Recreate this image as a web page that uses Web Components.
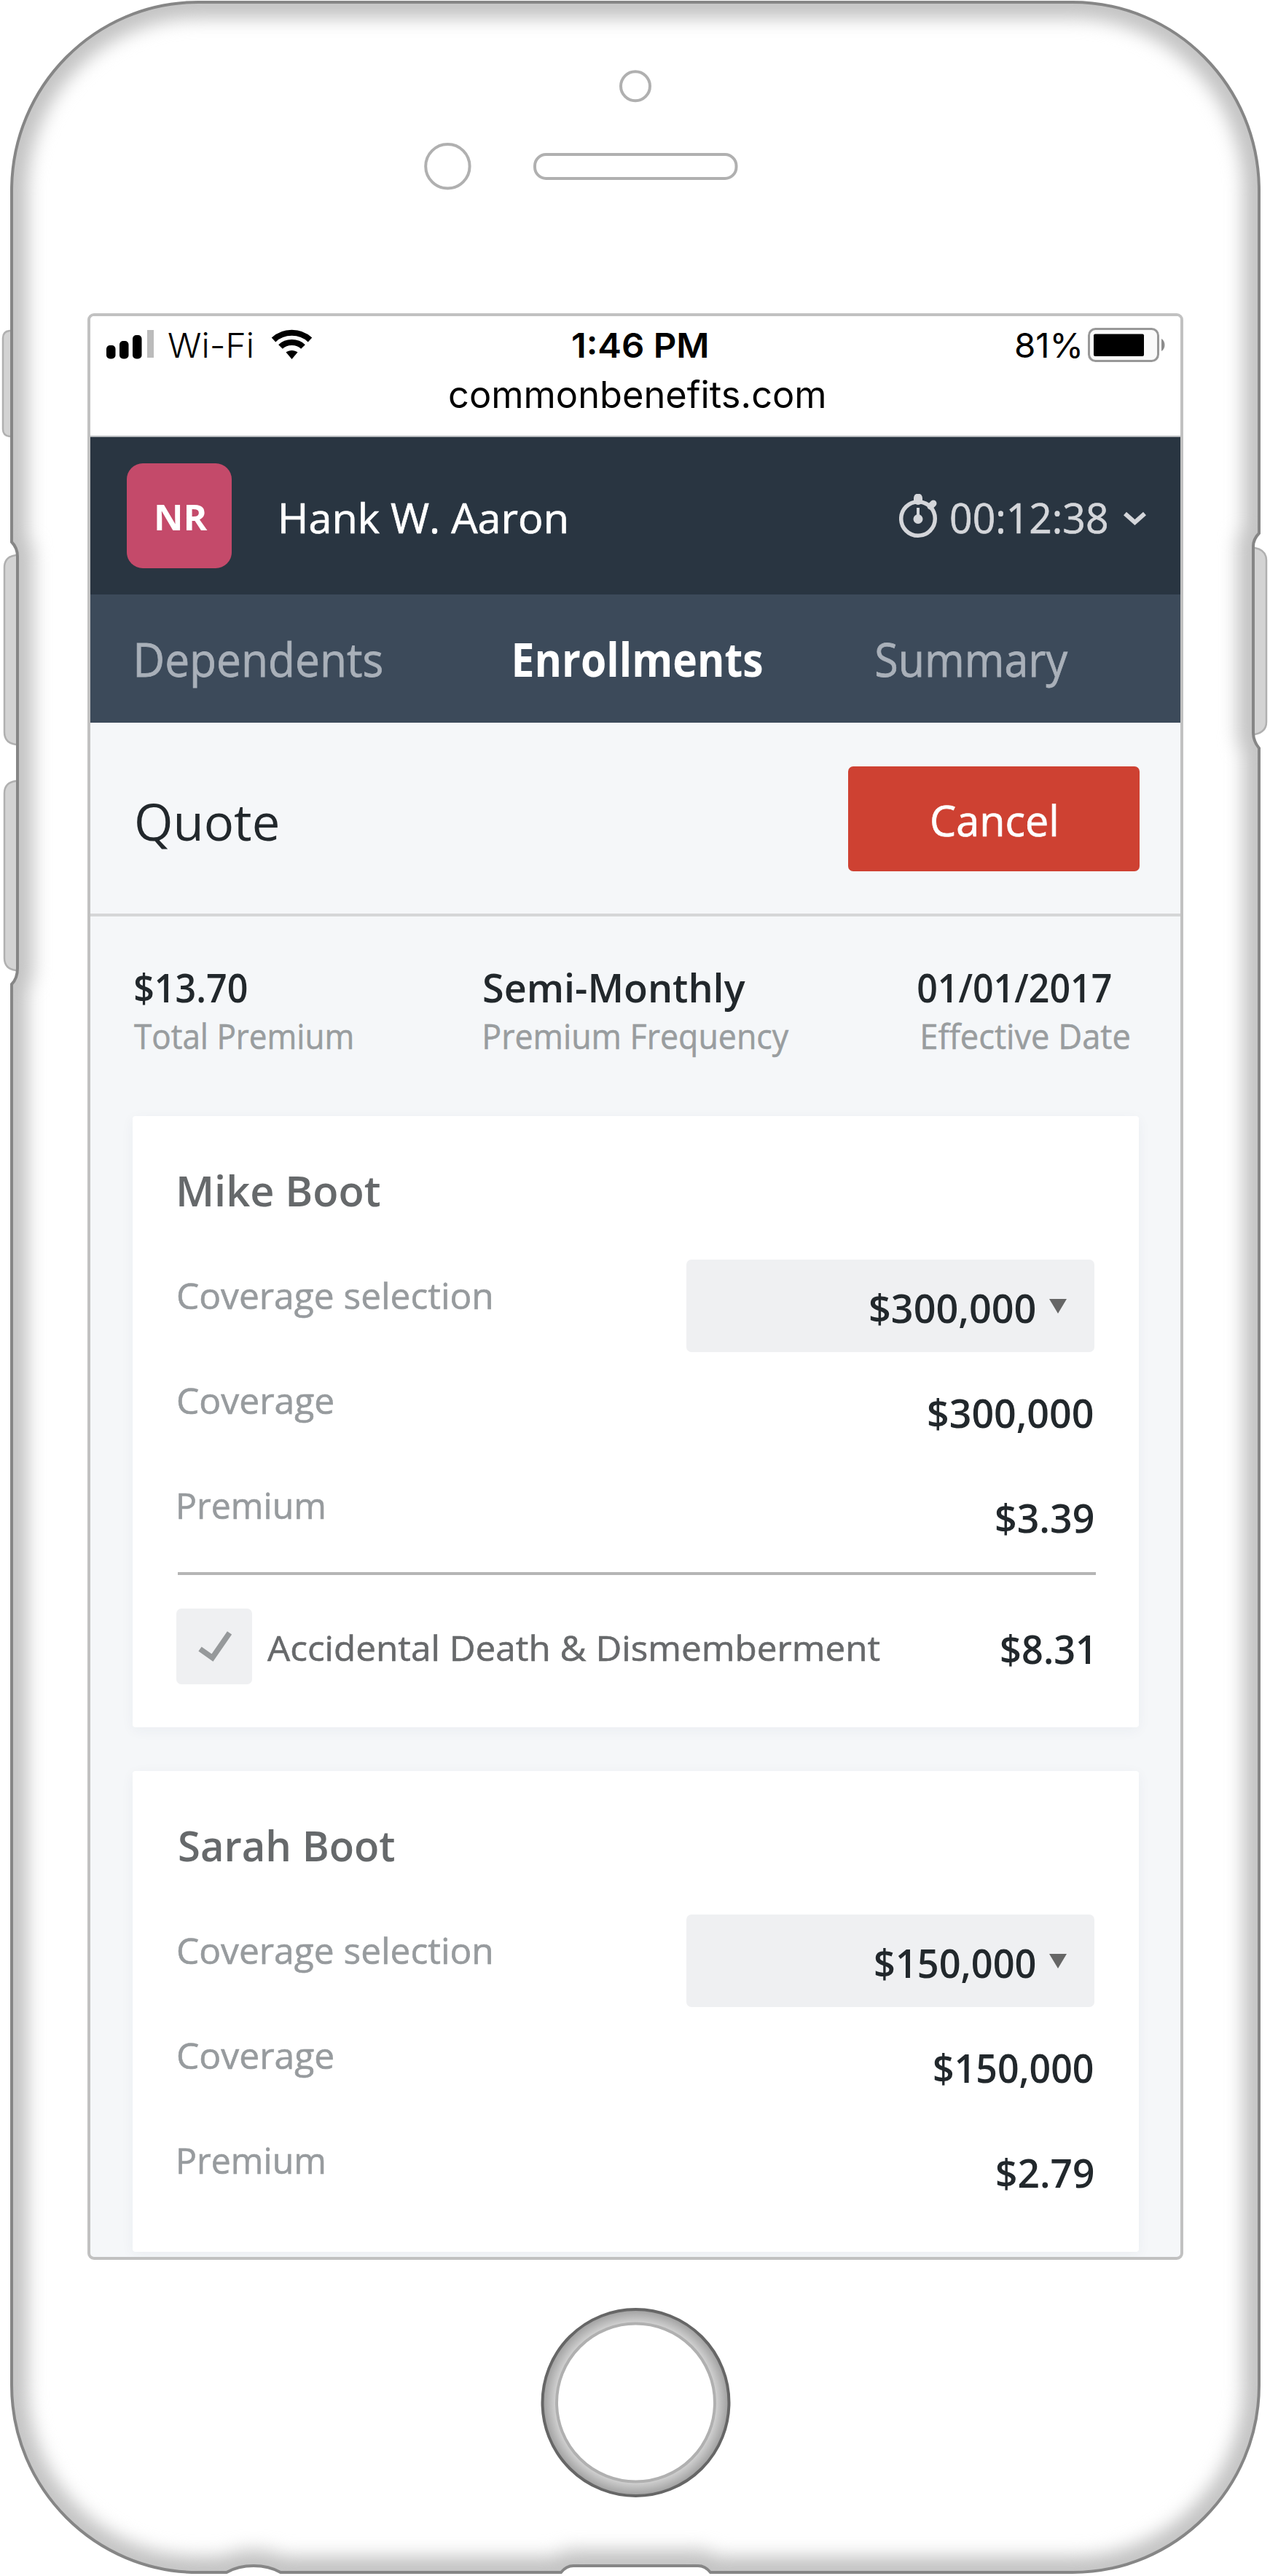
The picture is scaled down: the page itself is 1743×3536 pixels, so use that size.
<!DOCTYPE html>
<html lang="en">
<head>
<meta charset="utf-8">
<title>Quote</title>
<style>
html,body{margin:0;background:#fff}
body{width:1743px;height:3536px;overflow:hidden;font-family:"Open Sans","Noto Sans",sans-serif;font-weight:450}
</style>
</head>
<body>
<phone-frame>
  <status-bar></status-bar>
  <app-header></app-header>
  <tab-bar></tab-bar>
  <quote-bar></quote-bar>
  <quote-stats></quote-stats>
  <coverage-card>
    <fit-text slot="name" w="275">Mike Boot</fit-text>
    <fit-text slot="select" w="227">$300,000</fit-text>
    <fit-text slot="coverage" w="226">$300,000</fit-text>
    <fit-text slot="premium" w="133">$3.39</fit-text>
    <rider-row slot="rider"></rider-row>
  </coverage-card>
  <coverage-card>
    <fit-text slot="name" w="295">Sarah Boot</fit-text>
    <fit-text slot="select" w="220">$150,000</fit-text>
    <fit-text slot="coverage" w="218">$150,000</fit-text>
    <fit-text slot="premium" w="132">$2.79</fit-text>
  </coverage-card>
</phone-frame>
<script>
const define = (name, html, Base = HTMLElement) => {
  const t = document.createElement('template');
  t.innerHTML = html;
  customElements.define(name, class extends Base {
    constructor() {
      super();
      this.attachShadow({ mode: 'open' }).append(t.content.cloneNode(true));
    }
  });
};

// Text whose inked width is `w` pixels; the box hugs the ink horizontally.
// Body-weight text (450) gets a hairline stroke, and a pixel of room for it.
class FitBase extends HTMLElement {
  connectedCallback() {
    const cs = getComputedStyle(this);
    const ctx = document.createElement('canvas').getContext('2d');
    ctx.font = `${cs.fontWeight} ${cs.fontSize} ${cs.fontFamily}`;
    const m = ctx.measureText(this.textContent);
    const w = +this.getAttribute('w');
    const pad = cs.fontWeight === '450' ? 1 : 0;
    const k = (w - 2 * pad) / (m.actualBoundingBoxLeft + m.actualBoundingBoxRight);
    const span = this.shadowRoot.querySelector('span');
    this.style.width = w + 'px';
    if (pad) span.style.webkitTextStroke = '.012em currentColor';
    span.style.transform = `translateX(${m.actualBoundingBoxLeft * k + pad}px) scaleX(${k})`;
  }
}

define('phone-frame', `
<style>
:host{display:block;position:relative;width:1743px;height:3536px;box-sizing:border-box;padding:430px 0 0 120px}
.art{position:absolute;left:0;top:0}
.screen{position:relative;box-sizing:border-box;width:1504px;height:2672px;border:4px solid #c1c1c1;border-radius:9px;background:#f5f7f9;overflow:hidden;display:flex;flex-direction:column}
::slotted(*){flex:none}
</style>
<svg class="art" width="1743" height="3536" viewBox="0 0 1743 3536" fill="none">
  <defs>
    <path id="body" d="M272 3H1472C1613 3 1728 118 1728 262V732C1723 737 1720 742 1720 750V1006C1720 1014 1723 1021 1728 1027V3274C1728 3416 1613 3531 1472 3531H975C971 3526 966 3522 958 3522H787C779 3522 774 3526 770 3531H385C364 3519 332 3519 311 3531H272C131 3531 16 3416 16 3274V1351C21 1346 24 1340 24 1329V764C24 755 21 749 16 744V262C16 118 131 3 272 3Z"/>
    <filter id="soft" x="-60" y="-60" width="1863" height="3656" filterUnits="userSpaceOnUse" color-interpolation-filters="sRGB"><feGaussianBlur stdDeviation="12"/></filter>
    <radialGradient id="ring" cx="872.5" cy="3298" r="130" gradientUnits="userSpaceOnUse">
      <stop offset=".85" stop-color="#cfcfcf"/><stop offset="1" stop-color="#989898"/>
    </radialGradient>
  </defs>
  <g filter="url(#soft)"><use href="#body" stroke="#c3c3c3" stroke-width="44"/></g>
  <path fill="#fff" fill-rule="evenodd" d="M-10 -10H1753V3546H-10ZM272 3H1472C1613 3 1728 118 1728 262V732C1723 737 1720 742 1720 750V1006C1720 1014 1723 1021 1728 1027V3274C1728 3416 1613 3531 1472 3531H975C971 3526 966 3522 958 3522H787C779 3522 774 3526 770 3531H385C364 3519 332 3519 311 3531H272C131 3531 16 3416 16 3274V1351C21 1346 24 1340 24 1329V764C24 755 21 749 16 744V262C16 118 131 3 272 3Z"/>
  <g fill="#d3d3d3" stroke="#b0b0b0" stroke-width="2.5">
    <path d="M14 454H13Q4 455 4 464V589Q4 598 13 599H14"/>
    <path d="M22 762Q6 764 6 779V1005Q6 1020 22 1022"/>
    <path d="M22 1072Q6 1074 6 1089V1315Q6 1330 22 1332"/>
    <path d="M1722 752Q1738 755 1738 769V991Q1738 1005 1722 1008"/>
  </g>
  <use href="#body" stroke="#868686" stroke-width="4"/>
  <g stroke="#b0b0b0" stroke-width="4">
    <circle cx="872" cy="118.3" r="20"/>
    <circle cx="614.4" cy="228.3" r="30.2"/>
    <rect x="734" y="212" width="276.5" height="33" rx="15.5"/>
    <circle cx="872.5" cy="3298" r="128" fill="url(#ring)" stroke="#666"/>
    <circle cx="872.5" cy="3298" r="108.5" fill="#fff"/>
  </g>
</svg>
<div class="screen"><slot></slot></div>`);

define('status-bar', `
<style>
:host{display:block;box-sizing:border-box;height:166px;padding-top:14px;background:#fff;border-bottom:2px solid #b9bcbf;color:#000;font-family:Inter,sans-serif;font-size:47px;font-weight:370}
.row{display:flex;align-items:center;height:50px;padding-left:22px}
svg{display:block;flex:none}
.net{margin-left:20px;font-weight:300}
.wifi{margin-left:26px}
.time{margin-left:357px;font-weight:560}
.pct{margin-left:424px}
.bat{margin-left:11px}
.url{display:block;margin:18px 0 0 493px;font-size:51px}
</style>
<div class="row">
  <svg width="65" height="40" viewBox="0 0 65 40"><rect y="21" width="12.5" height="18.5" rx="5"/><rect x="18" y="15" width="12.5" height="24.5" rx="5"/><rect x="36" y="7" width="12.5" height="32.5" rx="5"/><rect x="56" y="0" width="9" height="38" fill="#bbb"/></svg>
  <fit-text class="net" w="115">Wi-Fi</fit-text>
  <svg class="wifi" width="57" height="42" viewBox="0 0 57 42" fill="none"><path d="M3.500 14.500C17 1.500 40 1.500 53.500 14.500" stroke="#000" stroke-width="8"/><path d="M13 24C21 16 36 16 44 24" stroke="#000" stroke-width="8"/><path d="M20.500 31.500C25 28 32 28 36.500 31.500L28.500 41Z" fill="#000"/></svg>
  <fit-text class="time" w="184">1:46 PM</fit-text>
  <fit-text class="pct" w="88">81%</fit-text>
  <svg class="bat" width="107" height="47" viewBox="0 0 107 47"><rect x="1.5" y="1.5" width="95" height="44" rx="9" fill="#fafafa" stroke="#989898" stroke-width="3"/><rect x="8" y="8.500" width="69" height="30.500" rx="2"/><path d="M101 15C107 18 107 29 101 32Z" fill="#8c8c8c"/></svg>
</div>
<fit-text class="url" w="514">commonbenefits.com</fit-text>`);

define('app-header', `
<style>
:host{display:flex;align-items:center;box-sizing:border-box;height:216px;padding-left:50px;background:#293541;color:#fff;font-size:57px}
.badge{display:flex;align-items:center;box-sizing:border-box;width:144px;height:144px;padding-left:41px;border-radius:22px;background:#c44a6a;font-size:49px;font-weight:700}
.badge fit-text{margin-top:2px}
.name{margin:5px 0 0 67px}
.timer{display:flex;align-items:center;margin-left:456px;color:#d4d6da}
.timer fit-text{margin:5px 22px 0 17px}
svg{display:block;flex:none}
</style>
<div class="badge"><fit-text w="70">NR</fit-text></div>
<fit-text class="name" w="393">Hank W. Aaron</fit-text>
<div class="timer">
  <svg width="53" height="61" viewBox="0 0 53 61" fill="none" stroke="currentColor"><circle cx="26" cy="34" r="23.3" stroke-width="5.500"/><path d="M26 9V5.500" stroke-width="12" stroke-linecap="round"/><path d="M43 17L47 13" stroke-width="9" stroke-linecap="round"/><path d="M26 19V34" stroke-width="4"/><circle cx="26" cy="34.500" r="6.500" fill="currentColor" stroke="none"/></svg>
  <fit-text w="216">00:12:38</fit-text>
  <svg width="31" height="20" viewBox="0 0 31 20" fill="none" stroke="currentColor" stroke-width="6" style="margin-top:8px"><path d="M2 3L15.500 15L29 3"/></svg>
</div>`);

define('tab-bar', `
<style>
:host{display:flex;align-items:center;height:176px;padding-left:63px;background:#3c4a5a;color:#a9b0b9;font-size:64px}
fit-text{margin-top:1px}
.on{color:#fff;font-weight:700;margin:1px 156px 0 181px}
</style>
<fit-text w="338">Dependents</fit-text>
<fit-text class="on" w="340">Enrollments</fit-text>
<fit-text w="265">Summary</fit-text>`);

define('quote-bar', `
<style>
:host{display:flex;align-items:center;justify-content:space-between;box-sizing:border-box;height:266px;padding:2px 56px 0 63px;border-bottom:4px solid #d5d6d7;color:#22282c;font-size:70px;font-weight:400}
.title{margin:5px 0 0 1px}
button{all:unset;box-sizing:border-box;display:flex;align-items:center;justify-content:center;width:400px;height:144px;padding-top:2px;border-radius:7px;background:#ce4132;color:#fff;font-size:59px;font-weight:450}
</style>
<fit-text class="title" w="193">Quote</fit-text>
<button><fit-text w="172">Cancel</fit-text></button>`);

define('quote-stats', `
<style>
:host{display:flex;box-sizing:border-box;height:274px;padding:69px 0 0 59px;color:#22282c}
div{display:flex;flex-direction:column;gap:16px}
.v{font-size:55px;font-weight:600}
.l{font-size:48px;color:#999d9f}
.a .v{margin-left:2px}
.b{margin-left:180px}
.c{margin-left:176px}
.c .l{margin-left:5px}
</style>
<div class="a"><fit-text class="v" w="154">$13.70</fit-text><fit-text class="l" w="301">Total Premium</fit-text></div>
<div class="b"><fit-text class="v" w="359">Semi-Monthly</fit-text><fit-text class="l" w="420">Premium Frequency</fit-text></div>
<div class="c"><fit-text class="v" w="265">01/01/2017</fit-text><fit-text class="l" w="286">Effective Date</fit-text></div>`);

define('coverage-card', `
<style>
:host{display:flex;flex-direction:column;box-sizing:border-box;width:1380.5px;min-height:660px;margin:0 0 60px 58px;padding:74px 58.5px 0 60px;border-radius:4px;background:#fff;box-shadow:0 4px 18px rgba(40,50,90,.05);color:#22282c}
.name{height:123px;padding-left:4px;font-size:57px;font-weight:600;color:#66696b}
.row{display:flex;justify-content:space-between;align-items:flex-start;height:144px;padding:0 2px 0 1px}
.row>fit-text{margin-top:24.5px;font-size:48.5px;color:#979b9e}
.val,.select{font-size:55px;font-weight:600}
.val{padding:38px 2px 0 0}
.select{display:flex;align-items:flex-start;justify-content:flex-end;gap:19px;box-sizing:border-box;width:560px;height:127px;padding:38px 38px 0 0;border-radius:7px;background:#eff0f2}
.select svg{display:block;margin-top:15.5px}
</style>
<div class="name"><slot name="name"></slot></div>
<div class="row"><fit-text w="432">Coverage selection</fit-text><div class="select"><slot name="select"></slot><svg width="24" height="20" viewBox="0 0 24 20"><path d="M0 0H24L12 20Z" fill="#666"/></svg></div></div>
<div class="row"><fit-text w="215">Coverage</fit-text><div class="val"><slot name="coverage"></slot></div></div>
<div class="row"><fit-text w="201" style="margin-left:1px">Premium</fit-text><div class="val"><slot name="premium"></slot></div></div>
<slot name="rider"></slot>`);

define('rider-row', `
<style>
:host{display:flex;align-items:flex-start;box-sizing:border-box;height:213px;margin:-3px 0 0 1.5px;border-top:4px solid #b5b5b5}
.box{display:flex;align-items:center;justify-content:center;box-sizing:border-box;width:104px;height:104px;margin:46px 0 0 -2px;padding-left:3px;border-radius:7px;background:#eff0f2}
.t{margin:76px 0 0 20px;font-size:48px;font-weight:450;color:#67696b}
.v{margin:73px 7px 0 auto;font-size:55px;font-weight:600}
</style>
<div class="box"><svg width="46" height="44" viewBox="0 0 46 44" fill="none"><path d="M2.500 25.500L19.500 37.500L43 3.500" stroke="#96999b" stroke-width="7.500"/></svg></div>
<fit-text class="t" w="843">Accidental Death &amp; Dismemberment</fit-text>
<fit-text class="v" w="123">$8.31</fit-text>`);

define('fit-text', `
<style>
:host{display:block;flex:none;line-height:1;white-space:nowrap}
span{display:inline-block;transform-origin:0 50%}
</style><span><slot></slot></span>`, FitBase);
</script>
</body>
</html>
